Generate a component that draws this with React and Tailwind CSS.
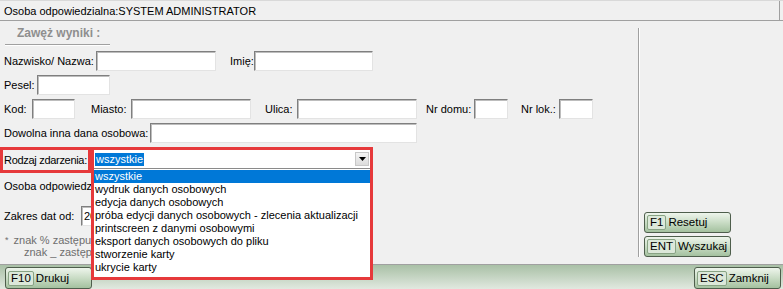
import React from "react";

const inp =
  "h-[20px] shrink-0 bg-white border border-t-[#7f7f7f] border-l-[#7f7f7f] border-r-[#e3e3e3] border-b-[#e3e3e3] shadow-[inset_1px_1px_0_#bdbdbd]";

function GBtn({ k, label, className }) {
  return (
    <div
      className={
        "flex items-center rounded-[3px] border border-[#4e5e4c] bg-linear-to-b from-[#eef5ec] via-[#c9dcc5] to-[#a4c19f] pl-[2px] text-[11.5px] text-black " +
        className
      }
    >
      <span className="h-[15px] px-[2px] border border-[#88a384] rounded-[2px] bg-[#dce8d9] leading-[13px]">
        {k}
      </span>
      <span className="ml-[2px] leading-[13px]">{label}</span>
    </div>
  );
}

const items = [
  "wszystkie",
  "wydruk danych osobowych",
  "edycja danych osobowych",
  "próba edycji danych osobowych - zlecenia aktualizacji",
  "printscreen z danymi osobowymi",
  "eksport danych osobowych do pliku",
  "stworzenie karty",
  "ukrycie karty",
];

export default function App() {
  return (
    <div className="w-[783px] h-[289px] overflow-hidden bg-[#f0f0f0] flex flex-col font-['Liberation_Sans',Arial,sans-serif] text-[11px] text-black">
      {/* top bar */}
      <div className="h-[21px] shrink-0 border-t border-t-[#d9d9d9] border-b border-b-[#a0a0a0] flex">
        <div className="w-[780px] border-r border-r-[#a0a0a0] pl-[4px] pt-[4px] leading-[13px]">
          Osoba odpowiedzialna:SYSTEM ADMINISTRATOR
        </div>
      </div>

      {/* content */}
      <div className="flex-1 flex min-h-0">
        <div className="w-[638px] shrink-0 flex flex-col">
          <div className="ml-[5px] w-[105px] h-[24px] border-b border-b-[#a0a0a0] shadow-[0_1px_0_#ffffff] flex items-center pl-[12px] font-bold text-[12px] text-[#8e8e8e]">
            Zawęż wyniki :
          </div>

          <div className="mt-[6px] h-[20px] flex items-center pl-[4px]">
            <span className="w-[92px] shrink-0">Nazwisko/ Nazwa:</span>
            <div className={inp + " w-[120px]"} />
            <span className="ml-[14px] w-[24px] shrink-0">Imię:</span>
            <div className={inp + " w-[119px]"} />
          </div>

          <div className="mt-[4px] h-[20px] flex items-center pl-[4px]">
            <span className="w-[33px] shrink-0">Pesel:</span>
            <div className={inp + " w-[73px]"} />
          </div>

          <div className="mt-[4px] h-[20px] flex items-center pl-[4px]">
            <span className="w-[28px] shrink-0">Kod:</span>
            <div className={inp + " w-[43px]"} />
            <span className="ml-[16px] w-[40px] shrink-0">Miasto:</span>
            <div className={inp + " w-[120px]"} />
            <span className="ml-[14px] w-[32px] shrink-0">Ulica:</span>
            <div className={inp + " w-[120px]"} />
            <span className="ml-[9px] w-[48px] shrink-0">Nr domu:</span>
            <div className={inp + " w-[34px]"} />
            <span className="ml-[13px] w-[38px] shrink-0">Nr lok.:</span>
            <div className={inp + " w-[34px]"} />
          </div>

          <div className="mt-[4px] h-[20px] flex items-center pl-[4px]">
            <span className="w-[146px] shrink-0">Dowolna inna dana osobowa:</span>
            <div className={inp + " w-[267px]"} />
          </div>

          {/* Rodzaj zdarzenia */}
          <div className="mt-[4px] h-[26px] flex items-start">
            <div className="w-[91px] h-[26px] shrink-0 border-[3px] border-[#e6393b] flex items-center pl-[1px] whitespace-nowrap tracking-[-0.3px] overflow-hidden">
              Rodzaj zdarzenia:
            </div>
            <div className="relative w-[282px] shrink-0 z-10">
              <div className="h-[22px] border-[3px] border-b-0 border-[#e6393b] bg-white flex items-center">
                <div className="flex-1 h-[19px] flex items-center border-b border-b-[#8a8a8a] pl-[1px]">
                  <span className="bg-[#0078d7] text-white leading-[13px] px-[1px]">wszystkie</span>
                  <div className="ml-auto mr-[1px] w-[14px] h-[14px] bg-linear-to-b from-[#f4f4f4] to-[#dcdcdc] border border-[#c8c8c8] flex items-center justify-center">
                    <svg width="7" height="4" viewBox="0 0 7 4">
                      <path d="M0 0H7L3.5 4Z" fill="#000" />
                    </svg>
                  </div>
                </div>
              </div>
              <div className="absolute left-0 top-[22px] w-[282px] border-[3px] border-t-0 border-[#e6393b] bg-white pb-[3px] pt-px">
                {items.map((t, i) => (
                  <div
                    key={t}
                    className={
                      "h-[13px] leading-[13px] pl-[1px] whitespace-nowrap " +
                      (i === 0 ? "bg-[#0078d7] text-white" : "")
                    }
                  >
                    {t}
                  </div>
                ))}
              </div>
            </div>
          </div>

          <div className="mt-[3px] h-[20px] w-[91px] flex items-center pl-[4px] overflow-hidden whitespace-nowrap">
            <span className="shrink-0">Osoba odpowiedzialna:</span>
          </div>

          <div className="mt-[10px] h-[20px] w-[91px] flex items-center pl-[4px] overflow-hidden">
            <span className="w-[77px] shrink-0">Zakres dat od:</span>
            <div className={inp + " w-[80px] pl-[2px] leading-[18px] overflow-hidden whitespace-nowrap"}>2024</div>
          </div>

          <div className="mt-[8px] pl-[5px] w-[91px] text-[#6e6e6e] leading-[12px] overflow-hidden whitespace-nowrap">
            <div>
              <span className="text-[9px] align-top">*</span>
              <span className="ml-[5px]">znak % zastępuje</span>
            </div>
            <div className="pl-[19px]">znak _ zastępuje</div>
          </div>
        </div>

        {/* right panel */}
        <div className="my-[7px] flex-1 border-l border-l-[#a0a0a0] shadow-[inset_1px_0_0_#ffffff] flex flex-col justify-end pl-[5px] gap-[3px]">
          <GBtn k="F1" label="Resetuj" className="w-[87px] h-[21px]" />
          <GBtn k="ENT" label="Wyszukaj" className="w-[87px] h-[21px]" />
        </div>
      </div>

      {/* bottom bar */}
      <div className="h-[25px] shrink-0 border-t border-t-[#a0a0a0] bg-linear-to-b from-[#a9c0a6] to-[#e1e9e0] flex items-end justify-between pl-[5px] pr-[2px]">
        <GBtn k="F10" label="Drukuj" className="w-[87px] h-[22px]" />
        <GBtn k="ESC" label="Zamknij" className="w-[87px] h-[22px]" />
      </div>
    </div>
  );
}
